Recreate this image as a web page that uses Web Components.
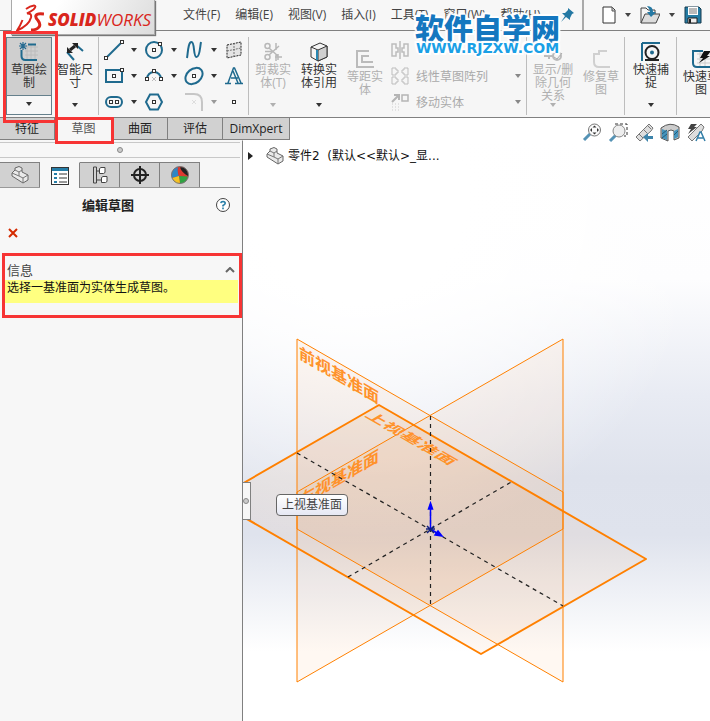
<!DOCTYPE html>
<html lang="zh-CN">
<head>
<meta charset="utf-8">
<title>SOLIDWORKS</title>
<style>
html, body { margin: 0; height: 100%; overflow: hidden; }
body { font: 12px/13px "Open Sans", "Noto Sans CJK SC", sans-serif; color: #333; }
</style>
</head>
<body>
<sw-app></sw-app>
<script>
const define = (name, html, setup) => {
  const template = document.createElement('template');
  template.innerHTML = html;
  customElements.define(name, class extends HTMLElement {
    constructor() {
      super();
      this.attachShadow({ mode: 'open' }).append(template.content.cloneNode(true));
    }
    connectedCallback() { if (setup) setup(this, this.shadowRoot); }
  });
};
const B = '#1f6a8e';
const box = (x, y) => `<rect x="${x - 1.5}" y="${y - 1.5}" width="3" height="3" fill="#fff" stroke="#333"/>`;
const partArt = `<path d="M1 7l3-3V2l4-1.500 3 1.500v4l6 3v5l-5 3-11-7z" fill="#e9e9e9" stroke="#666"/><path d="M4 4l4 2 3-2M8 6v4l4 2 5-3M12 12v5M1 7l7 3" fill="none" stroke="#777"/>`;
const I = {
  sketch: [20, 20, `<path d="M6 5h13M6 9h13M6 13h13M8 3v14M12 3v14M16 3v14" stroke="#bcbcbc"/><path d="M9 2.500h8M2.500 8v6q0 4 4 4H18" fill="none" stroke="${B}" stroke-width="2"/><path d="M4 0v8M0 4h8M1 1l6 6M7 1L1 7" stroke="#276b91" stroke-width="1.200"/>`],
  dim: [20, 20, `<path d="M10 2l8 7M2 10l7 8" stroke="${B}" stroke-width="2"/><path d="M5 8l5-4" stroke="#222" stroke-width="3"/><path d="M2 11V5l6 6zM13 1v6L7 1z" fill="#222"/>`],
  line: [20, 20, `<path d="M2 18L18 2" stroke="${B}" stroke-width="2"/>${box(2, 18)}${box(18, 2)}`],
  circle: [20, 20, `<circle cx="10" cy="10" r="8" fill="none" stroke="${B}" stroke-width="2"/>${box(10, 10)}${box(16, 4)}`],
  spline: [20, 20, `<path d="M3 18C4 13 4 2 7.500 2s1.500 15 5 15S16 6 17 2" fill="none" stroke="${B}" stroke-width="2"/>`],
  plane: [20, 20, `<path d="M3 5l14-3v13L3 18z" fill="#e4e4e4" stroke="#222" stroke-dasharray="2 1"/><path d="M3 11l14-3M10 3v14" stroke="#777" stroke-dasharray="2 1"/>`],
  rect: [20, 20, `<rect x="2" y="4" width="16" height="12" fill="none" stroke="${B}" stroke-width="2"/>${box(10, 10)}${box(18, 4)}`],
  arc: [20, 20, `<path d="M3 13a7 7 0 0 1 14 0" fill="none" stroke="${B}" stroke-width="2"/><path d="M8 11l4 4M12 11l-4 4" stroke="#bbb"/>${box(3, 13)}${box(17, 13)}${box(10, 5)}`],
  ellipse: [20, 20, `<ellipse cx="10" cy="10" rx="9.500" ry="7" transform="rotate(-40 10 10)" fill="none" stroke="${B}" stroke-width="2"/>${box(10, 10)}`],
  letter: [20, 20, `<path d="M1 17.500h6M11 17.500h8M4 17L9.500 2h1L17 17M7 12h7M9 5l5 12" fill="none" stroke="${B}" stroke-width="1.500"/>`],
  slot: [20, 20, `<rect x="2" y="5" width="16" height="10" rx="5" fill="none" stroke="${B}" stroke-width="2"/>${box(7, 10)}${box(13, 10)}`],
  hex: [20, 20, `<path d="M2 10l4-7.500h8l4 7.500-4 7.500H6z" fill="none" stroke="${B}" stroke-width="2"/>${box(10, 10)}`],
  fillet: [20, 20, `<path d="M1 2h9q8 0 8 8v9" fill="none" stroke="#c6c6c6" stroke-width="2"/><path d="M8 8l4 4M12 8l-4 4" stroke="#ddd"/>`],
  point: [20, 20, box(10, 10)],
  trim: [20, 20, `<g fill="none" stroke="#b8b8b8" stroke-width="1.500"><circle cx="4.500" cy="4" r="2.500"/><circle cx="4.500" cy="15" r="2.500"/><path d="M6 6l9 8M6 13L16 4M13 1v7M13 12v7M2 9.500h7M12 15h7M15 12v6"/></g>`],
  convert: [20, 20, `<path d="M2 5l9-4 7 3v11l-9 4-7-4z" fill="#f4f4f4" stroke="#333"/><path d="M9 8l9-4v11l-9 4z" fill="#d0d0d0" stroke="#333"/><path d="M2 5l7 3" stroke="#333"/><path d="M8 8v10" stroke="#2787b2" stroke-width="2"/>`],
  offset: [20, 20, `<path d="M14 2H2v16h17M14 7H7v6h11" fill="none" stroke="#bbb" stroke-width="2"/>`],
  mirror: [18, 18, `<path d="M9 0v18M1 3v12h4v-4h2V7H5V3zM17 3v12h-4v-4h-2V7h2V3z" fill="none" stroke="#bdbdbd" stroke-width="1.500"/>`],
  pattern: [18, 18, `<path d="M1 1h4v2h2v3H5v2H1zM17 1h-4v2h-2v3h2v2h4zM1 10h4v2h2v3H5v2H1zM17 10h-4v2h-2v3h2v2h4z" fill="none" stroke="#bdbdbd"/>`],
  move: [18, 18, `<path d="M1 9l6-6M3 2h5v5" fill="none" stroke="#b5b5b5" stroke-width="2"/><rect x="11" y="2" width="6" height="6" fill="none" stroke="#b5b5b5" stroke-width="1.500"/><path d="M1 11h7M1 14h7M1 17h7" stroke="#ccc" stroke-dasharray="1 2"/>`],
  relations: [20, 20, `<path d="M1 14h9M6 11v6" stroke="#bbb" stroke-width="2"/><circle cx="14" cy="14" r="4" fill="none" stroke="#bbb" stroke-width="2"/><path d="M11 15l3 2 5-6" fill="none" stroke="#aaa"/>`],
  repair: [20, 20, `<path d="M16 2H8V5H3v8q0 5 5 5h11" fill="none" stroke="#d0d0d0" stroke-width="2"/>`],
  snap: [20, 20, `<path d="M1 1h18M1 1v18" stroke="${B}" stroke-width="2"/><path d="M4 18h14" stroke="#222" stroke-width="2"/><circle cx="11" cy="10.500" r="6.500" fill="none" stroke="#222" stroke-width="2"/><circle cx="11" cy="10.500" r="2" fill="${B}"/>`],
  rapid: [20, 20, `<path d="M6 5h14M6 10h14M6 14h14M9 3v14M14 3v14" stroke="#ccc"/><path d="M12 2H2v12q0 4 4 4h14" fill="none" stroke="${B}" stroke-width="2"/><path d="M13 2h7l-4 5h3l-11 7 4-5H9z" fill="#111"/>`],
  arrow: [6, 4, `<path d="M0 0h6L3 4z" fill="currentColor"/>`],
  pin: [14, 14, `<path d="M8 0l6 5-2 1-2 4 0 2-4-3-5 5 4-6-3-3 3 0 3-3z" fill="#2478a3"/>`],
  newdoc: [14, 20, `<path d="M1 2h9l3 3v13H1z" fill="#fff" stroke="#333"/><path d="M10 2v4h3" fill="#ccc" stroke="#555"/>`],
  open: [20, 20, `<path d="M1 18V3h5l2 2h7v4" fill="#f5f5f5" stroke="#444"/><path d="M1 18L5 9h15l-4 9z" fill="#ddd" stroke="#444"/><path d="M7 1q6 0 6 6h3l-5 5-4-5h3q0-3-3-6z" fill="#2478a3"/>`],
  save: [18, 20, `<path d="M1 2h14l2 2v14H1z" fill="#247ba3" stroke="#173b4e"/><path d="M4 2h10v8H4z" fill="#fff"/><path d="M5 4h8M5 6h8M5 8h8" stroke="#777"/><path d="M4 13h9v5H4z" fill="#eee" stroke="#222"/><path d="M6 14v4" stroke="#222" stroke-width="2"/>`],
  fit: [20, 20, `<path d="M2 17l6-6" stroke="#5593b5" stroke-width="3"/><circle cx="12.500" cy="7" r="6" fill="#fafafa" stroke="#777"/><path d="M12.500 2.500l2 2h-4zM12.500 11.500l2-2h-4zM8 7l2-2v4zM17 7l-2-2v4z" fill="#333"/>`],
  zoomarea: [20, 20, `<path d="M7 1h12v12h-3" fill="none" stroke="#333" stroke-dasharray="3 2"/><path d="M2 18l6-6" stroke="#5593b5" stroke-width="3"/><circle cx="11" cy="8" r="6" fill="#eee" stroke="#888"/>`],
  prev: [20, 20, `<path d="M2 14L13 3l2-2 4 4-2 3L6 18z" fill="#ddd" stroke="#777"/><path d="M9 6l4 4M5 11l4 4M13 2l4 4" stroke="#777"/><path d="M9 14l5-4v3h5v3h-5v3z" fill="#3d84ab"/>`],
  section: [20, 20, `<path d="M1 5q9-7 18-1v11l-5 2V8q-3-2-6 0v10l-7-3z" fill="#ccc" stroke="#555"/><path d="M2 6l5 2v9l-5-2zM14 8l4-2v8l-4 2z" fill="#4594bd"/><path d="M2 11l5-4M2 15l5-4M14 12l4-4" stroke="#245c79"/>`],
  view: [20, 20, `<path d="M2 14L13 3l2-2 3 3-2 4L6 18z" fill="#ddd" stroke="#777"/><path d="M5 1h6L8 4h3l-9 7 3-5H2z" fill="#444"/><path d="M10 18l4-9h1l4 9M12 15h5" fill="none" stroke="#337fa8" stroke-width="1.500"/>`],
  part: [18, 18, partArt],
  list: [18, 18, `<rect x=".5" y=".5" width="17" height="17" fill="#fff" stroke="#333"/><path d="M1 2.500h16" stroke="#267ea8" stroke-width="3"/><path d="M3 7h3M3 11h3M3 15h3" stroke="#267ea8" stroke-width="2"/><path d="M8 7h8M8 11h8M8 15h8" stroke="#333"/>`],
  tree: [18, 18, `<path d="M2.500 1v16M5.500 1v16M2.500 1h3M2.500 17h3M6 5h3M6 14h4" fill="none" stroke="#444"/><path d="M8.500 2.500l1.500-1h4v5l-1.500 1h-4zM10.500 11.500l1.500-1h4v5l-1.500 1h-4z" fill="#fff" stroke="#444"/>`],
  target: [18, 18, `<circle cx="9" cy="9" r="6" fill="none" stroke="#222" stroke-width="2"/><path d="M9 0v18M0 9h18" stroke="#222" stroke-width="2"/>`],
  ball: [18, 18, `<circle cx="9" cy="9" r="8.500" fill="#d92c25"/><path d="M8 10L1 12A9 9 0 0 1 3 3l4-2q-1 5 1 9z" fill="#2e86c4"/><path d="M8 10q-2-5 0-9.500 3 0 5 1L17 11z" fill="#dc3930"/><path d="M9 1.500q3-1.500 6 1.500 3 4 2 7-6-3-8-8.500z" fill="#222"/><path d="M8 10l9 .5Q16 17 9 17.500z" fill="#2fa342"/><path d="M8 10l1 7.500q-6 0-8-5.500z" fill="#f4c224"/><circle cx="9" cy="9" r="8.500" fill="none" stroke="#777"/>`],
  help: [14, 14, `<circle cx="7" cy="7" r="6.500" fill="#fff" stroke="#444"/><path d="M4.800 5.200q.2-1.700 2.200-1.700 2.200.1 2.200 1.700Q9.200 6.300 7 7.500V8.500M7 9.500v1.700" fill="none" stroke="#267ea8" stroke-width="1.600"/>`],
  cross: [10, 10, `<path d="M1 1l8 8M9 1L1 9" stroke="#d42a00" stroke-width="2"/>`],
  up: [10, 6, `<path d="M1 5l4-4 4 4" fill="none" stroke="#666" stroke-width="2"/>`],
  right: [5, 8, `<path d="M0 0l5 4-5 4z" fill="#222"/>`]
};

define('sw-icon', `<style>:host{display:inline-flex;flex:none} svg{display:block}</style>`, (el, root) => {
  const [w, h, art] = I[el.getAttribute('name')];
  const holder = document.createElement('template');
  holder.innerHTML = `<svg width="${w}" height="${h}" viewBox="0 0 ${w} ${h}" aria-hidden="true">${art}</svg>`;
  root.append(holder.content);
});

define('sw-logo', `<style>
:host{display:block;box-sizing:border-box;width:144px;height:35px;background:linear-gradient(120deg,#fff 30%,#dcdcdc);border:solid #aaa;border-width:0 1px 1px;box-shadow:1px 1px 1px #777}
div{display:flex;align-items:center;gap:4px;padding-left:4px;color:#d9261c}
span{font:italic 17px/34px "Open Sans",sans-serif;padding-top:3px} b{font-weight:800}
</style><div><svg width="28" height="30" viewBox="0 0 28 30" fill="none" stroke="#d9261c" stroke-width="2"><path d="M10 5q4-3 8-3.500 3 .5-.5 4Q14 8 11 9.500q5-.5 4 4-2 8-14 13 3-4 5.500-10.500" /><path d="M28 10q-7-1-8 1.500-1 2 2 5 3 4 1 6.500-2 3-8 3" stroke-width="3"/></svg><span><b>SOLID</b>WORKS</span></div>`);

define('sw-menubar', `<style>
:host{display:flex;align-items:stretch;height:30px;background:#f7f7f7;border-bottom:1px solid #808080;padding-left:183px;overflow:hidden}
nav{display:flex;align-items:center;gap:15px;flex:none;width:401px;border-right:2px solid #aaa;box-sizing:border-box}
button{all:unset;white-space:nowrap;color:#444;line-height:30px;display:flex;align-items:center}
.end{margin-left:auto;margin-right:8px}
.files{display:flex;align-items:center;gap:9px;padding-left:18px;color:#444}
</style><nav><button>文件(F)</button><button>编辑(E)</button><button>视图(V)</button><button>插入(I)</button><button>工具(T)</button><button>窗口(W)</button><button>帮助(H)</button><button class="end" aria-label="固定"><sw-icon name="pin"></sw-icon></button></nav>
<div class="files"><button aria-label="新建"><sw-icon name="newdoc"></sw-icon></button><button aria-label="新建选项"><sw-icon name="arrow"></sw-icon></button><button aria-label="打开"><sw-icon name="open"></sw-icon></button><button aria-label="打开选项"><sw-icon name="arrow"></sw-icon></button><button aria-label="保存"><sw-icon name="save"></sw-icon></button><button aria-label="保存选项"><sw-icon name="arrow"></sw-icon></button></div>`);

define('sw-command', `<style>
:host{display:block;flex:none;width:46px;height:78px}
button{all:unset;box-sizing:border-box;display:flex;flex-direction:column;align-items:center;width:100%;height:100%;padding-top:5px;color:#333;text-align:center}
.label{width:42px;margin-top:1px}
.arrow{margin-top:auto;padding:7px 0 8px;display:flex;justify-content:center;width:100%}
:host([wide]){width:50px}
:host([low]) button{padding-top:12px}
:host([three]) .arrow{padding-top:0}
:host([disabled]) button{color:#b0b0b0}
:host([plain]) .arrow{display:none}
:host([selected]) button{border:1px solid #65808c;background:linear-gradient(#cfcfcf 57px,#65808c 57px 58px,#f7f7f7 58px);padding-top:4px}
</style><button><span class="icon"></span><span class="label"><slot></slot></span><span class="arrow"><sw-icon name="arrow"></sw-icon></span></button>`, (el, root) => {
  const icon = document.createElement('sw-icon');
  icon.setAttribute('name', el.getAttribute('icon'));
  root.querySelector('.icon').replaceWith(icon);
  root.querySelector('button').disabled = el.hasAttribute('disabled');
});

define('sw-sketch-tools', `<style>
:host{display:grid;grid-template-columns:repeat(7,20px);grid-template-rows:repeat(3,26px);flex:none;margin:0 4px}
button{all:unset;display:flex;align-items:center;justify-content:center;color:#333} .off{color:#999}
</style>`, (el, root) => {
  [['line','直线'],'v',['circle','圆'],'v',['spline','样条曲线'],'v',['plane','基准面'],
   ['rect','矩形'],'v',['arc','圆弧'],'v',['ellipse','椭圆'],'v',['letter','文字'],
   ['slot','槽口'],'v',['hex','多边形'],'',['fillet','圆角'],'x',['point','点']].forEach(t => {
    if (t === '') { root.append(document.createElement('i')); return; }
    const b = document.createElement('button');
    const name = Array.isArray(t) ? t[0] : 'arrow';
    b.setAttribute('aria-label', Array.isArray(t) ? t[1] : '更多选项');
    if (t === 'x') b.className = 'off';
    b.innerHTML = `<sw-icon name="${name}"></sw-icon>`;
    root.append(b);
  });
});

define('sw-ribbon', `<style>
:host{display:flex;box-sizing:border-box;height:87px;padding:6px 0 0 6px;background:#f6f6f6;border-bottom:1px solid #808080;overflow:hidden}
hr{flex:none;width:1px;height:78px;margin:0 1px 0 0;border:0;background:#bdbdbd}
.list{flex:none;width:138px;display:grid;grid-template-rows:repeat(3,26px)}
.list button{all:unset;display:flex;align-items:center;gap:7px;padding:0 5px 0 3px;color:#aaa}
.list sw-icon:nth-child(2){margin-left:auto;color:#888}
</style>
<sw-command icon="sketch" selected>草图绘制</sw-command><sw-command icon="dim">智能尺寸</sw-command><hr>
<sw-sketch-tools></sw-sketch-tools><hr>
<sw-command icon="trim" disabled>剪裁实体(T)</sw-command><sw-command icon="convert">转换实体引用</sw-command><sw-command icon="offset" disabled plain low>等距实体</sw-command>
<div class="list"><button aria-label="镜向实体"><sw-icon name="mirror"></sw-icon></button><button><sw-icon name="pattern"></sw-icon>线性草图阵列<sw-icon name="arrow"></sw-icon></button><button><sw-icon name="move"></sw-icon>移动实体<sw-icon name="arrow"></sw-icon></button></div><hr>
<sw-command icon="relations" disabled three wide>显示/删除几何关系</sw-command><sw-command icon="repair" disabled plain low>修复草图</sw-command><hr>
<sw-command icon="snap" wide>快速捕捉</sw-command><hr><sw-command icon="rapid" plain low>快速草图</sw-command>`);

define('sw-tabs', `<style>
:host{display:flex;justify-content:space-between;position:relative;z-index:1;height:22px;background:linear-gradient(90deg,#f7f7f7 243px,#fff 243px)}
.tabs{display:flex;height:22px}
.tabs button{all:unset;box-sizing:border-box;width:55px;text-align:center;line-height:20px;background:#d1d1d1;color:#222;border:solid #808080;border-width:0 1px 1px 0}
.tabs button.on{background:#f6f6f6;width:58px;border-color:#f6f6f6;color:#555}
.tabs button.last{width:67px}
.view{display:flex;gap:6px;padding:5px 4px 0 0}
.view button{all:unset;display:flex;height:20px}
</style><div class="tabs"><button>特征</button><button class="on">草图</button><button>曲面</button><button>评估</button><button class="last">DimXpert</button></div>
<div class="view"><button aria-label="整屏显示全图"><sw-icon name="fit"></sw-icon></button><button aria-label="局部放大"><sw-icon name="zoomarea"></sw-icon></button><button aria-label="上一视图"><sw-icon name="prev"></sw-icon></button><button aria-label="剖面视图"><sw-icon name="section"></sw-icon></button><button aria-label="视图定向"><sw-icon name="view"></sw-icon></button></div>`);

define('sw-panel', `<style>
:host{display:block;box-sizing:border-box;background:#f7f7f7;border-right:1px solid #808080;border-top:1px solid #f7f7f7}
button{all:unset}
.grip{display:flex;align-items:center;justify-content:center;height:14px;margin:1px 2px 4px 0;border:solid #c8c8c8;border-width:1px 0}
.grip i{width:4px;height:4px;border:1px solid #888;border-radius:50%;background:#ccc}
.tabs{display:flex;border-bottom:1px solid #999;margin-right:2px}
.tabs button{box-sizing:border-box;width:40px;height:25px;display:flex;align-items:center;justify-content:center;background:#d1d1d1;border:solid #808080;border-width:1px 1px 0 0}
.tabs .on{background:#f7f7f7;margin-bottom:-1px;height:26px;border-top-color:#f7f7f7}
header{display:flex;align-items:center;justify-content:center;position:relative;padding-right:26px;height:34px}
h1{margin:0;font-size:13px;line-height:34px;color:#222}
header button{position:absolute;right:12px;display:flex}
.close{display:block;padding:5px 8px;height:10px}
section{margin-top:10px;padding:8px 4px 15px 5px}
h2{font-size:13px;line-height:20px;font-weight:400;margin:0;color:#444;display:flex;justify-content:space-between;align-items:center;padding:0 3px 0 2px}
h2 button{display:flex}
p{margin:0;background:#ffff80;color:#111;line-height:15px;height:23px;padding-left:2px}
</style>
<div class="grip"><i></i></div>
<div class="tabs"><button aria-label="设计树"><sw-icon name="part"></sw-icon></button><button class="on" aria-label="属性"><sw-icon name="list"></sw-icon></button><button aria-label="配置"><sw-icon name="tree"></sw-icon></button><button aria-label="尺寸专家"><sw-icon name="target"></sw-icon></button><button aria-label="外观"><sw-icon name="ball"></sw-icon></button></div>
<header><h1>编辑草图</h1><button aria-label="帮助"><sw-icon name="help"></sw-icon></button></header>
<button class="close" aria-label="关闭"><sw-icon name="cross"></sw-icon></button>
<section><h2>信息<button aria-label="折叠"><sw-icon name="up"></sw-icon></button></h2><p>选择一基准面为实体生成草图。</p></section>`);

define('sw-viewport', `<style>
:host{display:block;position:relative;overflow:hidden;background:radial-gradient(ellipse 75% 60% at 25% 10%,#fff 30%,#fff0),linear-gradient(#fff 0,#fdfdfe 24%,#e8ebf3 44%,#dee2ec 58%,#dfe3ed 68%,#eff1f6 78%,#fff 88%)}
.scene{position:absolute;inset:0;width:100%;height:100%}
text{font:700 16px "Noto Sans CJK SC",sans-serif;fill:#ff922b}
.tree{all:unset;position:relative;display:flex;align-items:center;height:18px;padding:7px 0 0 5px;color:#111;white-space:pre;font-family:"DejaVu Sans","Noto Sans CJK SC",sans-serif}
.tree sw-icon + sw-icon{margin:0 4px 0 13px}
.tip{position:absolute;left:33px;top:354px;padding:0 5px;border:1px solid #666;border-radius:4px;background:linear-gradient(#fff,#e6e8f4);line-height:20px;color:#444}
.handle{all:unset;position:absolute;left:-1px;top:342px;box-sizing:border-box;width:9px;height:38px;background:#f7f7f7;border:1px solid #808080;border-left:0;display:flex;align-items:center;justify-content:center}
.handle i{width:4px;height:4px;border:1px solid #888;border-radius:50%;background:#ccc}
</style>
<svg class="scene" aria-label="基准面"><g transform="translate(-243 -140)">
<g fill="#ff8c1a" fill-opacity=".06" stroke="none"><path d="M297 339L563 492V682L297 529z"/><path d="M297 492L563 339V529L297 682z"/><path d="M379 405L646 559 481 654 214 500z"/></g>
<path d="M297 452L379 405 430 434 563 511V529L430 605 297 529z" fill="#d98a46" fill-opacity=".06"/>
<g fill="none" stroke="#ff8000" stroke-linejoin="round"><path d="M297 339L563 492V682L297 529zM297 492L563 339V529L297 682z"/><path d="M379 405L646 559 481 654 214 500z" stroke-width="2"/></g>
<text transform="translate(299 358) skewY(30)">前视基准面</text>
<text transform="translate(299 507) skewY(-30)">右视基准面</text>
<text transform="matrix(1.08 .62 -.72 .42 364 416)">上视基准面</text>
<g stroke="#222" stroke-width="1.200" stroke-dasharray="4 4"><path d="M430.500 416V605M297 453L563 606M348 577L513 481"/></g>
<g stroke="#00f" stroke-width="1.500" fill="#00f"><path d="M430.500 529V507M430.500 529l8 5"/><path d="M430.500 503l2 6h-4zM442 536l-7-1 3-4z"/><path d="M426 529h9M427 526l7 7M434 526l-7 7" stroke="#102080"/></g>
</g></svg>
<button class="tree"><sw-icon name="right"></sw-icon><sw-icon name="part"></sw-icon>零件2  (默认&lt;&lt;默认&gt;_显...</button>
<div class="tip" role="tooltip">上视基准面</div>
<button class="handle" aria-label="展开设计树"><i></i></button>`);

define('sw-watermark', `<style>
:host{display:block;text-align:center;white-space:nowrap;text-shadow:1px 0 #fff,-1px 0 #fff,0 1px #fff,0 -1px #fff,2px 0 1px #fff,-2px 0 1px #fff,0 2px 1px #fff,0 -2px 1px #fff,2px 2px 1px #fff,-2px -2px 1px #fff}
b{display:block;font:900 29px/30px "Noto Sans CJK SC",sans-serif;color:#1477bf}
span{display:block;font:700 14px/12px "DejaVu Sans",sans-serif;color:#1aa0e6}
</style><b>软件自学网</b><span>WWW.RJZXW.COM</span>`);

define('sw-callout', `<style>:host{display:block;box-sizing:border-box;border:3px solid #f73434;pointer-events:none}</style>`);

define('sw-app', `<style>
:host{position:relative;display:grid;grid-template-rows:auto auto auto 1fr;height:100vh;overflow:hidden}
main{display:grid;grid-template-columns:243px 1fr;min-height:0}
sw-logo{position:absolute;left:11px;top:0}
sw-watermark{position:absolute;left:415px;top:12px}
sw-callout{position:absolute;z-index:2}
.a{left:3px;top:31px;width:55px;height:92px}
.b{left:55px;top:117px;width:59px;height:27px}
.c{left:2px;top:253px;width:240px;height:65px}
</style>
<sw-menubar></sw-menubar><sw-ribbon></sw-ribbon><sw-tabs></sw-tabs>
<main><sw-panel></sw-panel><sw-viewport></sw-viewport></main>
<sw-logo></sw-logo><sw-watermark></sw-watermark>
<sw-callout class="a"></sw-callout><sw-callout class="b"></sw-callout><sw-callout class="c"></sw-callout>`);
</script>
</body>
</html>
